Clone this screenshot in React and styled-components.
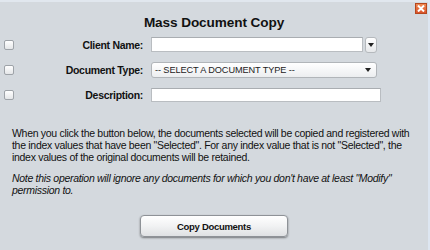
import React from "react";
import styled, { createGlobalStyle } from "styled-components";

const GlobalStyle = createGlobalStyle`
  html, body { margin: 0; padding: 0; background: #d4d9de; }
  body { font-family: "Liberation Sans", Arial, Helvetica, sans-serif; color: #111; }
`;

const Dialog = styled.div`
  position: relative;
  width: 428px;
  height: 248px;
  background: #d4d9de;
  border-top: 2px solid #e1e7ee;
  border-right: 2px solid #dde6f1;
  box-sizing: content-box;
`;

const Close = styled.button`
  position: absolute;
  top: 1px;
  right: 1px;
  width: 12px;
  height: 11px;
  padding: 0;
  border: 1px solid #b5471e;
  background: linear-gradient(#f08a52, #d9532a);
  display: flex;
  align-items: center;
  justify-content: center;
  cursor: pointer;
`;

const Title = styled.h1`
  margin: 0;
  padding-top: 12px;
  text-align: center;
  font-size: 13.6px;
  letter-spacing: -0.1px;
  font-weight: bold;
  line-height: 17px;
  color: #111;
`;

const Form = styled.div`
  display: grid;
  grid-template-columns: 14px 125px auto;
  grid-auto-rows: 15px;
  row-gap: 10px;
  align-items: center;
  padding-left: 4px;
  margin-top: 6px;
`;

const Check = styled.span`
  width: 8px;
  height: 8px;
  border: 1px solid #9ea3a8;
  border-radius: 2px;
  background: linear-gradient(#ffffff, #e4e6e8);
  box-sizing: content-box;
`;

const Label = styled.label`
  text-align: right;
  font-size: 10.5px;
  letter-spacing: -0.3px;
  font-weight: bold;
  color: #111;
`;

const Field = styled.div`
  display: flex;
  align-items: center;
  gap: 2px;
  margin-left: 8px;
`;

const Input = styled.div`
  width: ${(p) => p.$w}px;
  height: ${(p) => p.$h || 15}px;
  box-sizing: border-box;
  background: #fff;
  border: 1px solid #b9bdc1;
  border-top-color: #a9adb1;
`;

const DropBtn = styled.div`
  width: 12px;
  height: 16px;
  box-sizing: border-box;
  border: 1px solid #b5b9bd;
  border-radius: 3px;
  background: linear-gradient(#ffffff, #e6e8ea);
  display: flex;
  align-items: center;
  justify-content: center;
`;

const Select = styled.div`
  width: 226px;
  height: 16px;
  box-sizing: border-box;
  border: 1px solid #b1b5b9;
  border-radius: 3px;
  background: linear-gradient(#ffffff, #eceef0);
  display: flex;
  align-items: center;
  justify-content: space-between;
  padding: 0 5px 0 3px;
  font-size: 9.2px;
  letter-spacing: -0.1px;
  color: #222;
`;

const Arrow = () => (
  <svg width="6" height="4" viewBox="0 0 6 4">
    <path d="M0 0 L6 0 L3 4 Z" fill="#222" />
  </svg>
);

const Text = styled.p`
  margin: 0;
  padding: 0 8px 0 12px;
  font-size: 10.5px;
  letter-spacing: -0.3px;
  line-height: 11.8px;
  color: #111;
  font-style: ${(p) => (p.$italic ? "italic" : "normal")};
`;

const Body = styled.div`
  display: flex;
  flex-direction: column;
  gap: 9.5px;
  margin-top: 26px;
`;

const Footer = styled.div`
  display: flex;
  justify-content: center;
  margin-top: 19px;
`;

const Button = styled.button`
  width: 148px;
  height: 22px;
  border: 1px solid #8e9297;
  border-radius: 4px;
  background: linear-gradient(#ffffff, #f1f2f3 50%, #dfe1e3);
  box-shadow: 0 1px 2px rgba(0, 0, 0, 0.45);
  font-family: "Liberation Sans", Arial, sans-serif;
  font-size: 9.5px;
  letter-spacing: -0.3px;
  font-weight: bold;
  color: #111;
  padding: 0;
`;

export default function App() {
  return (
    <>
      <GlobalStyle />
      <Dialog>
        <Close aria-label="Close">
          <svg width="8" height="7" viewBox="0 0 8 7">
            <path d="M1 0.5 L7 6.5 M7 0.5 L1 6.5" stroke="#fff" strokeWidth="2" />
          </svg>
        </Close>
        <Title>Mass Document Copy</Title>
        <Form>
          <Check />
          <Label>Client Name:</Label>
          <Field>
            <Input $w={212} />
            <DropBtn>
              <Arrow />
            </DropBtn>
          </Field>

          <Check />
          <Label>Document Type:</Label>
          <Field>
            <Select>
              <span>-- SELECT A DOCUMENT TYPE --</span>
              <Arrow />
            </Select>
          </Field>

          <Check />
          <Label>Description:</Label>
          <Field>
            <Input $w={230} $h={14} />
          </Field>
        </Form>
        <Body>
          <Text>
            When you click the button below, the documents selected will be copied and registered with
            the index values that have been "Selected". For any index value that is not "Selected", the
            index values of the original documents will be retained.
          </Text>
          <Text $italic>
            Note this operation will ignore any documents for which you don't have at least "Modify"
            permission to.
          </Text>
        </Body>
        <Footer>
          <Button>Copy Documents</Button>
        </Footer>
      </Dialog>
    </>
  );
}
